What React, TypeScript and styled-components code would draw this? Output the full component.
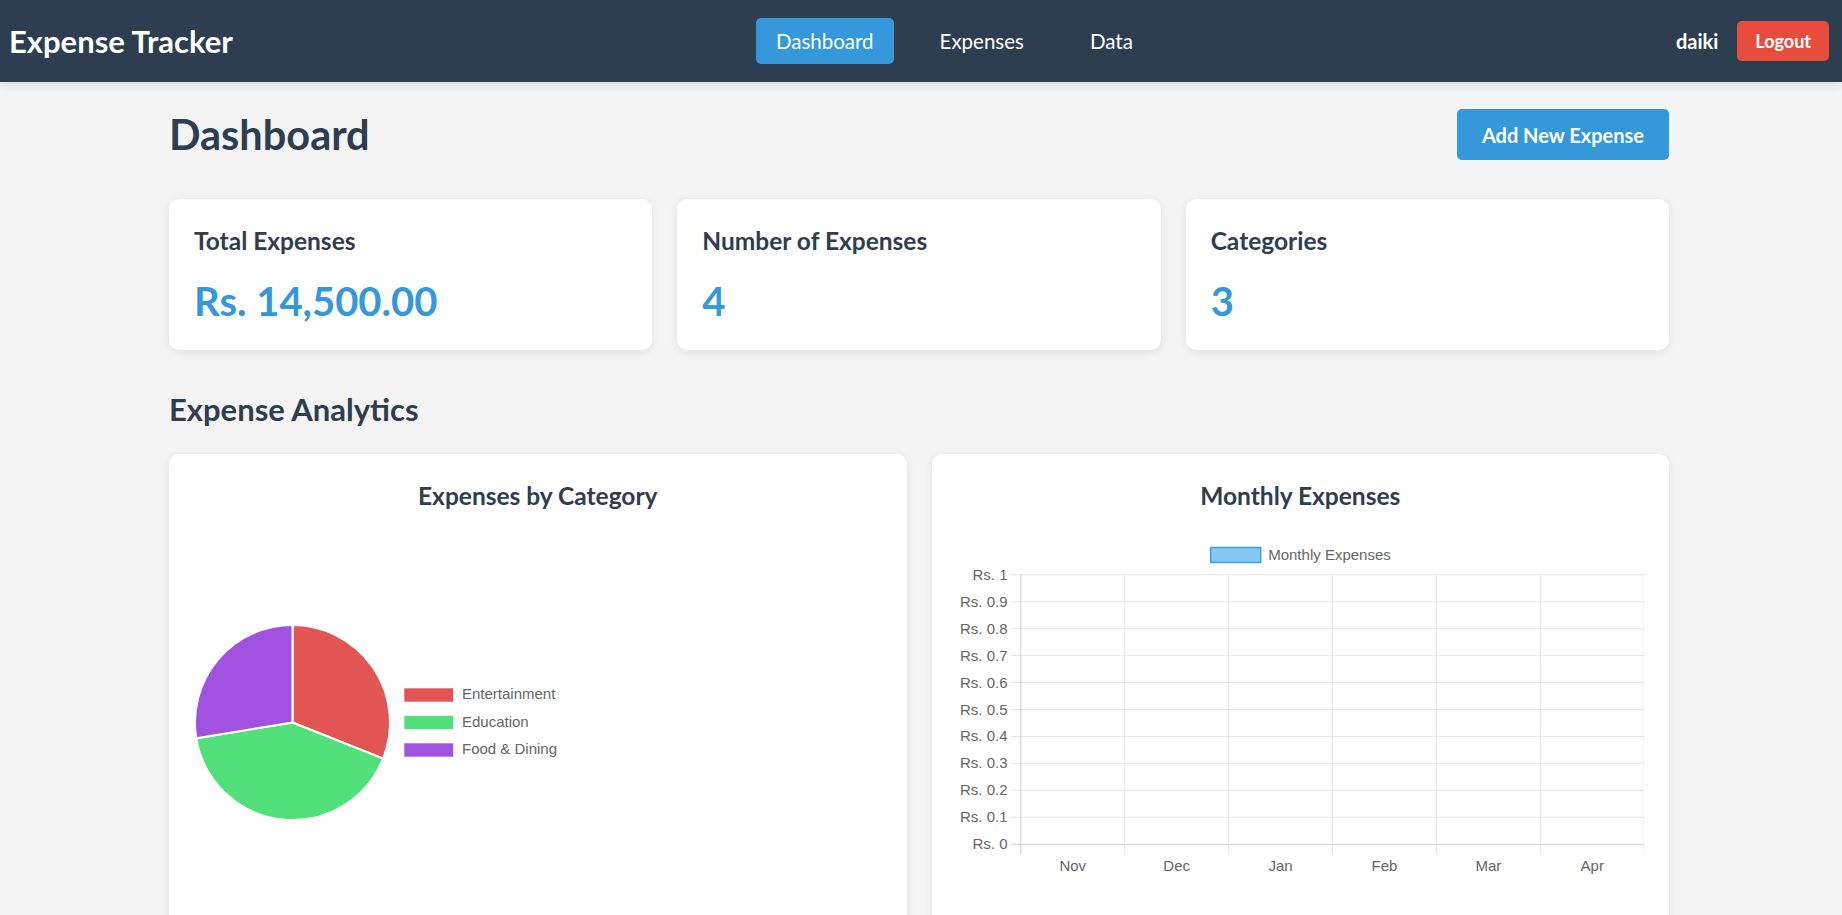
import styled, { createGlobalStyle } from "styled-components";

const GlobalStyle = createGlobalStyle`
  * {
    box-sizing: border-box;
  }
  body {
    margin: 0;
    background: #f4f4f4;
    color: #2c3e50;
    font-family: Lato, "Noto Sans", sans-serif;
  }
`;

const Navbar = styled.nav`
  position: relative;
  z-index: 1;
  height: 82px;
  padding: 0 13px 0 9px;
  display: flex;
  align-items: center;
  justify-content: space-between;
  background: #2c3e50;
  box-shadow: 0 2px 10px rgba(0, 0, 0, 0.12);
`;

const Brand = styled.div`
  color: white;
  font-size: 31px;
  font-weight: 700;
`;

const NavLinks = styled.div`
  display: flex;
  gap: 26px;
`;

const NavLink = styled.a<{ $active?: boolean }>`
  padding: 10px 20px;
  border-radius: 5px;
  font-size: 20.5px;
  line-height: 26px;
  color: white;
  text-decoration: none;
  background: ${(p) => (p.$active ? "#3498db" : "transparent")};
  cursor: pointer;
`;

const UserArea = styled.div`
  display: flex;
  align-items: center;
  gap: 19px;
`;

const UserName = styled.span`
  color: white;
  font-size: 20px;
  font-weight: 700;
`;

const LogoutButton = styled.button`
  height: 40px;
  padding: 0 18px;
  border: none;
  border-radius: 5px;
  background: #e74c3c;
  color: white;
  font-family: inherit;
  font-size: 18px;
  font-weight: 700;
  cursor: pointer;
`;

const Main = styled.main`
  width: 1500px;
  margin-left: calc(50% - 752px);
  padding-top: 27px;
`;

const PageHeader = styled.div`
  display: flex;
  align-items: center;
  justify-content: space-between;
  margin-bottom: 39px;
`;

const PageTitle = styled.h1`
  margin: 0;
  font-size: 41.5px;
  line-height: 51px;
  font-weight: 700;
`;

const PrimaryButton = styled.button`
  height: 51px;
  padding: 0 25px;
  border: none;
  border-radius: 5px;
  background: #3498db;
  color: white;
  font-family: inherit;
  font-size: 20px;
  font-weight: 700;
  cursor: pointer;
`;

const StatsGrid = styled.div`
  display: grid;
  grid-template-columns: repeat(3, 1fr);
  gap: 25px;
  margin-bottom: 41px;
`;

const Card = styled.div`
  background: white;
  border-radius: 10px;
  padding: 25px;
  box-shadow: 0 2px 10px rgba(0, 0, 0, 0.08);
`;

const CardTitle = styled.h3<{ $center?: boolean }>`
  margin: 0;
  font-size: 24.5px;
  line-height: 33px;
  font-weight: 700;
  text-align: ${(p) => (p.$center ? "center" : "left")};
`;

const StatValue = styled.div`
  margin-top: 20px;
  font-size: 40px;
  line-height: 48px;
  font-weight: 700;
  color: #3498db;
`;

const SectionTitle = styled.h2`
  margin: 0 0 27px;
  font-size: 31px;
  line-height: 36px;
  font-weight: 700;
`;

const ChartsGrid = styled.div`
  display: grid;
  grid-template-columns: repeat(2, 1fr);
  gap: 25px;
`;

const ChartCanvas = styled.svg`
  display: block;
  margin-top: 15px;
  width: 100%;
  height: 400px;
  font-family: "Liberation Sans", Arial, sans-serif;
  font-size: 15px;
`;

const CHART_W = 687.5;

const categories = [
  { name: "Entertainment", amount: 4500, color: "#e15555" },
  { name: "Education", amount: 6000, color: "#52e07b" },
  { name: "Food & Dining", amount: 4000, color: "#a152e0" },
];

const months = ["Nov", "Dec", "Jan", "Feb", "Mar", "Apr"];

function point(cx: number, cy: number, r: number, deg: number) {
  const a = (deg * Math.PI) / 180;
  return [cx + r * Math.sin(a), cy - r * Math.cos(a)];
}

function PieChart() {
  const cx = 98.5;
  const cy = 195.5;
  const r = 97.5;
  const total = categories.reduce((s, c) => s + c.amount, 0);
  let start = 0;
  const slices = categories.map((c) => {
    const sweep = (c.amount / total) * 360;
    const [x1, y1] = point(cx, cy, r, start);
    const [x2, y2] = point(cx, cy, r, start + sweep);
    start += sweep;
    const large = sweep > 180 ? 1 : 0;
    return {
      ...c,
      d: `M${cx} ${cy} L${x1} ${y1} A${r} ${r} 0 ${large} 1 ${x2} ${y2} Z`,
    };
  });
  return (
    <ChartCanvas viewBox={`0 0 ${CHART_W} 400`}>
      {slices.map((s) => (
        <path key={s.name} d={s.d} fill={s.color} stroke="#fff" strokeWidth={2} />
      ))}
      {categories.map((c, i) => (
        <g key={c.name}>
          <rect
            x={210}
            y={161 + i * 27.5}
            width={49.5}
            height={14}
            fill={c.color}
            stroke="rgba(255,255,255,0.6)"
            strokeWidth={1}
          />
          <text x={268} y={172 + i * 27.5} fill="#666">
            {c.name}
          </text>
        </g>
      ))}
    </ChartCanvas>
  );
}

function MonthlyChart() {
  const left = 63.8;
  const top = 47.7;
  const step = 26.96;
  const colW = 103.9;
  const bottom = top + step * 10;
  const ticks = Array.from({ length: 11 }, (_, i) => 10 - i);
  return (
    <ChartCanvas viewBox={`0 0 ${CHART_W} 400`}>
      <rect
        x={253.7}
        y={20.5}
        width={50}
        height={15}
        fill="rgba(54,162,235,0.6)"
        stroke="#36a2eb"
        strokeWidth={1.5}
      />
      <text x={311.2} y={33} fill="#666">
        Monthly Expenses
      </text>
      {ticks.map((t, i) => {
        const y = top + i * step;
        return (
          <g key={t}>
            <line
              x1={54.5}
              x2={CHART_W}
              y1={y}
              y2={y}
              stroke={t === 0 ? "#cfcfcf" : "#e6e6e6"}
              strokeWidth={1}
            />
            <text x={50.5} y={y + 5} fill="#666" textAnchor="end">
              {t === 10 ? "Rs. 1" : t === 0 ? "Rs. 0" : `Rs. 0.${t}`}
            </text>
          </g>
        );
      })}
      {Array.from({ length: 7 }, (_, k) => (
        <line
          key={k}
          x1={left + k * colW}
          x2={left + k * colW}
          y1={top}
          y2={bottom + 10}
          stroke={k === 0 ? "#cfcfcf" : "#e6e6e6"}
          strokeWidth={1}
        />
      ))}
      {months.map((m, k) => (
        <text key={m} x={left + k * colW + colW / 2} y={344.3} fill="#666" textAnchor="middle">
          {m}
        </text>
      ))}
    </ChartCanvas>
  );
}

export default function App() {
  return (
    <>
      <GlobalStyle />
      <Navbar>
        <Brand>Expense Tracker</Brand>
        <NavLinks>
          <NavLink $active>Dashboard</NavLink>
          <NavLink>Expenses</NavLink>
          <NavLink>Data</NavLink>
        </NavLinks>
        <UserArea>
          <UserName>daiki</UserName>
          <LogoutButton>Logout</LogoutButton>
        </UserArea>
      </Navbar>
      <Main>
        <PageHeader>
          <PageTitle>Dashboard</PageTitle>
          <PrimaryButton>Add New Expense</PrimaryButton>
        </PageHeader>
        <StatsGrid>
          <Card>
            <CardTitle>Total Expenses</CardTitle>
            <StatValue>Rs. 14,500.00</StatValue>
          </Card>
          <Card>
            <CardTitle>Number of Expenses</CardTitle>
            <StatValue>4</StatValue>
          </Card>
          <Card>
            <CardTitle>Categories</CardTitle>
            <StatValue>3</StatValue>
          </Card>
        </StatsGrid>
        <SectionTitle>Expense Analytics</SectionTitle>
        <ChartsGrid>
          <Card>
            <CardTitle $center>Expenses by Category</CardTitle>
            <PieChart />
          </Card>
          <Card>
            <CardTitle $center>Monthly Expenses</CardTitle>
            <MonthlyChart />
          </Card>
        </ChartsGrid>
      </Main>
    </>
  );
}
